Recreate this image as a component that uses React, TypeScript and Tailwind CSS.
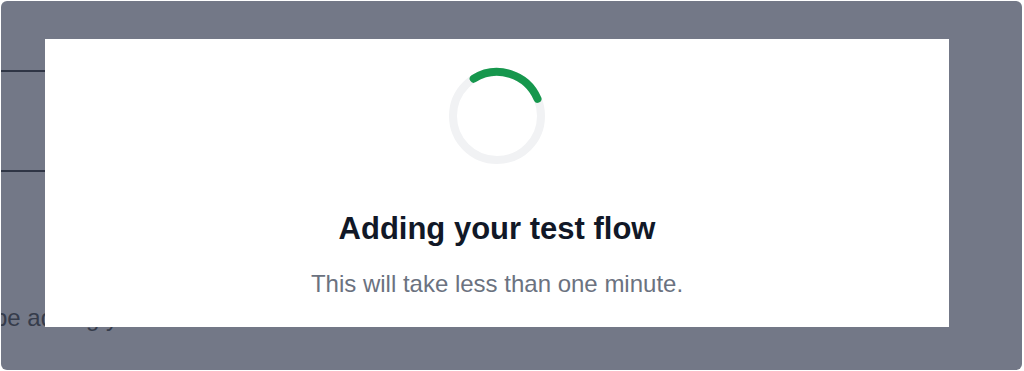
import React from 'react'

// Loading modal shown while a test flow is being created

const Spinner: React.FC = () => (
  <svg className="h-[98px] w-[98px]" viewBox="0 0 98 98" fill="none">
    <circle cx="49" cy="49" r="44" stroke="#f1f2f4" strokeWidth="8" />
    {/* arc from about -32deg to 67deg, measured from the top */}
    <path
      d="M25.68 11.69 A44 44 0 0 1 89.5 31.81"
      stroke="#16974d"
      strokeWidth="8"
      strokeLinecap="round"
    />
  </svg>
)

const App: React.FC = () => {
  return (
    <div className="h-[371px] w-[1024px] bg-white p-px font-['Liberation_Sans',Arial,sans-serif]">
      <div className="relative h-[369px] w-[1021px] overflow-hidden rounded-md bg-[#737887]">
        {/* page behind the overlay */}
        <div className="flex w-[60px] flex-col">
          <div className="mt-[69px] h-[2px] w-full bg-[#2f3545]" />
          <div className="mt-[98px] h-[2px] w-full bg-[#2f3545]" />
          <p className="ml-[-7px] mt-[134px] whitespace-nowrap text-[24px] leading-none text-[#363c4b]">be adding your</p>
        </div>

        {/* modal */}
        <div className="absolute left-[44px] top-[38px] flex h-[288px] w-[904px] flex-col items-center bg-white">
          <div className="mt-[28px]">
            <Spinner />
          </div>
          <h2 className="mt-[48px] text-[31px] font-bold leading-none text-[#111827]">Adding your test flow</h2>
          <p className="mt-[28px] text-[24px] leading-none text-[#6b7280]">This will take less than one minute.</p>
        </div>
      </div>
    </div>
  )
}

export default App
